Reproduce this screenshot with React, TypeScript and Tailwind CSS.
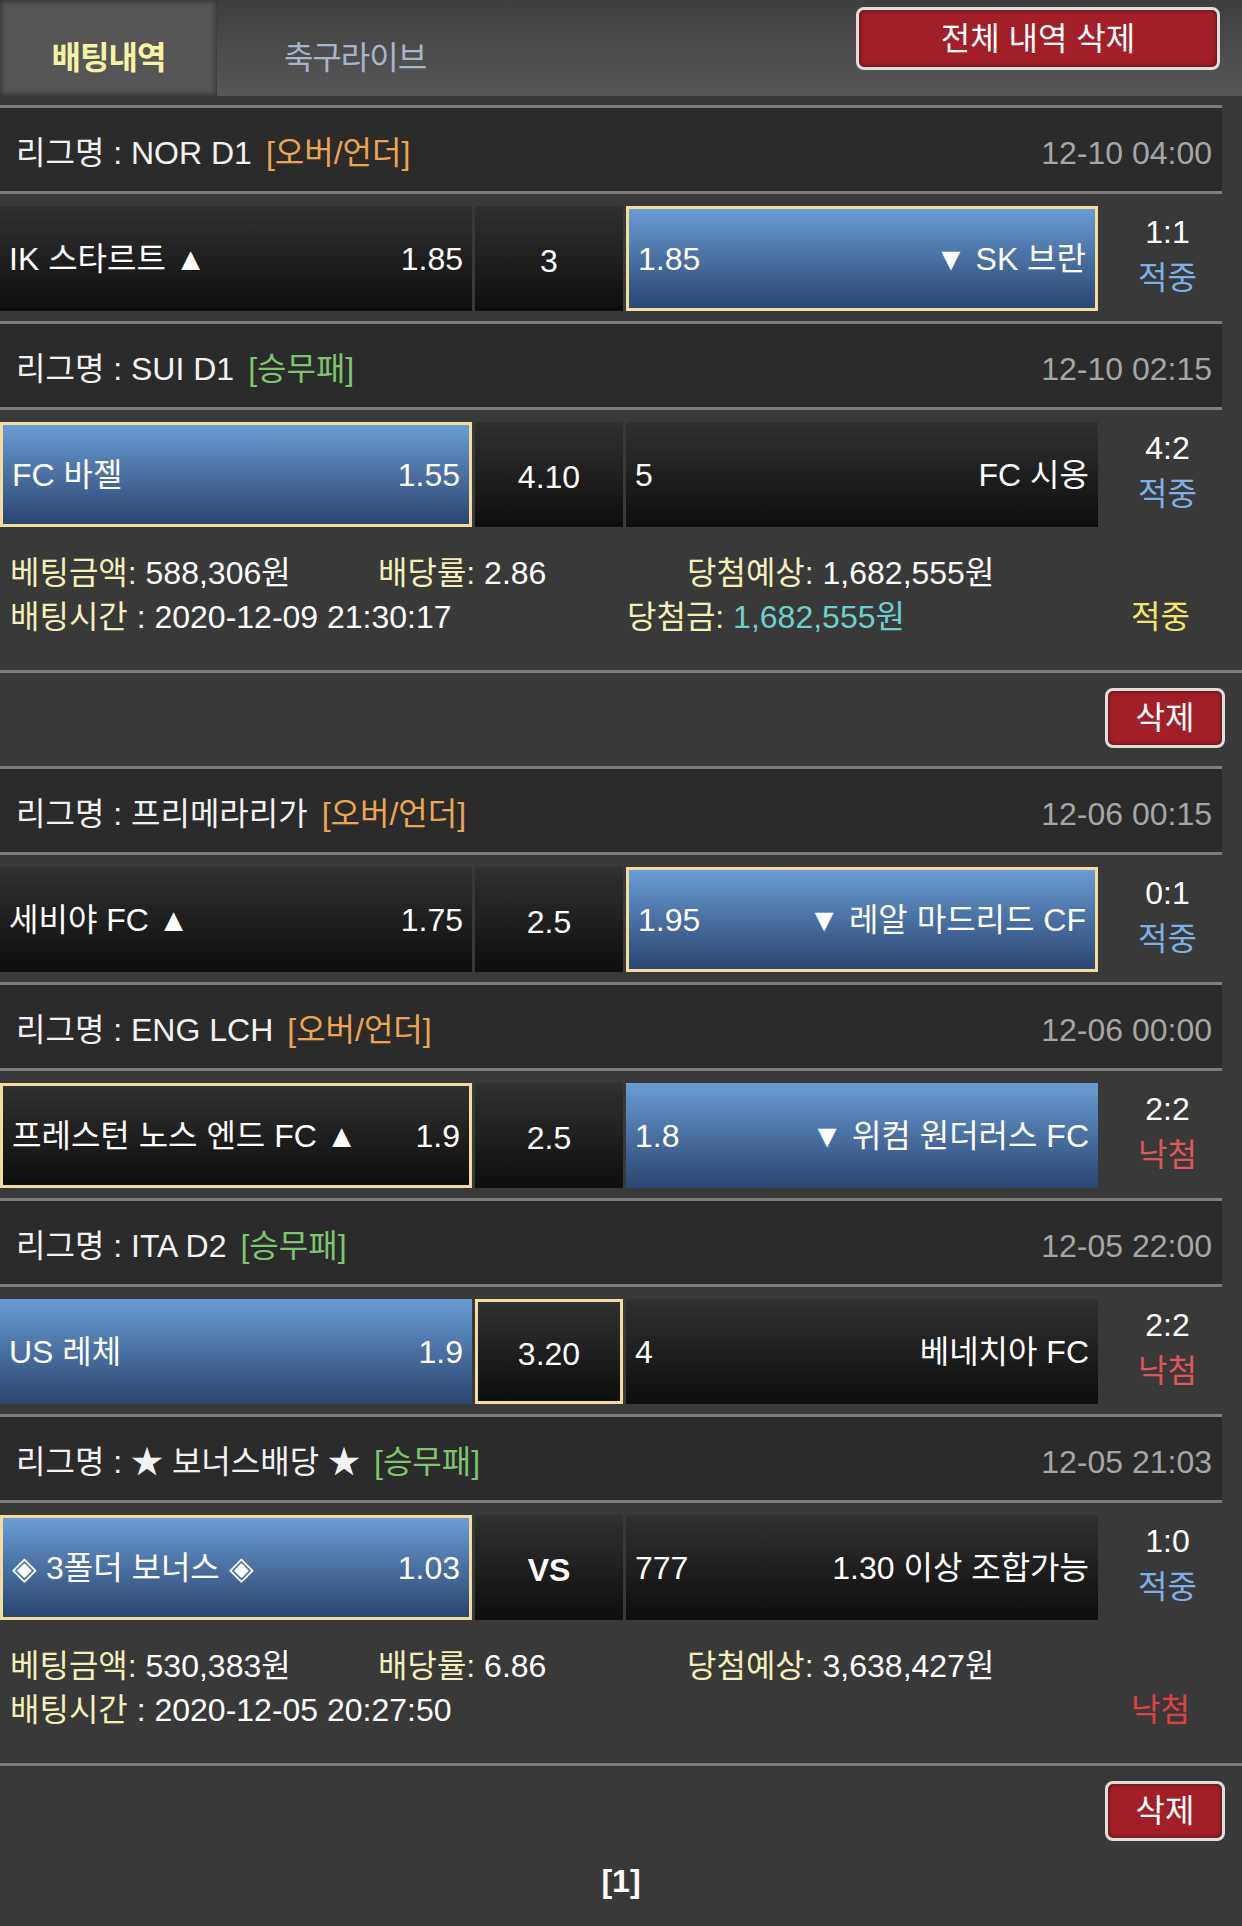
import React from 'react'

type Cell = {
  left?: string
  right?: string
  center?: string
  blue?: boolean
  picked?: boolean
  bold?: boolean
}

type Match = {
  league: string
  kind: string
  time: string
  home: Cell
  draw: Cell
  away: Cell
  score: string
  hit: boolean
}

type Bet = {
  matches: Match[]
  amount: string
  rate: string
  expect: string
  time: string
  win?: string
  hit: boolean
}

const bets: Bet[] = [
  {
    matches: [
      {
        league: 'NOR D1',
        kind: '[오버/언더]',
        time: '12-10 04:00',
        home: { left: 'IK 스타르트 ▲', right: '1.85' },
        draw: { center: '3' },
        away: { left: '1.85', right: '▼ SK 브란', blue: true, picked: true },
        score: '1:1',
        hit: true,
      },
      {
        league: 'SUI D1',
        kind: '[승무패]',
        time: '12-10 02:15',
        home: { left: 'FC 바젤', right: '1.55', blue: true, picked: true },
        draw: { center: '4.10' },
        away: { left: '5', right: 'FC 시옹' },
        score: '4:2',
        hit: true,
      },
    ],
    amount: '588,306원',
    rate: '2.86',
    expect: '1,682,555원',
    time: '2020-12-09 21:30:17',
    win: '1,682,555원',
    hit: true,
  },
  {
    matches: [
      {
        league: '프리메라리가',
        kind: '[오버/언더]',
        time: '12-06 00:15',
        home: { left: '세비야 FC ▲', right: '1.75' },
        draw: { center: '2.5' },
        away: { left: '1.95', right: '▼ 레알 마드리드 CF', blue: true, picked: true },
        score: '0:1',
        hit: true,
      },
      {
        league: 'ENG LCH',
        kind: '[오버/언더]',
        time: '12-06 00:00',
        home: { left: '프레스턴 노스 엔드 FC ▲', right: '1.9', picked: true },
        draw: { center: '2.5' },
        away: { left: '1.8', right: '▼ 위컴 원더러스 FC', blue: true },
        score: '2:2',
        hit: false,
      },
      {
        league: 'ITA D2',
        kind: '[승무패]',
        time: '12-05 22:00',
        home: { left: 'US 레체', right: '1.9', blue: true },
        draw: { center: '3.20', picked: true },
        away: { left: '4', right: '베네치아 FC' },
        score: '2:2',
        hit: false,
      },
      {
        league: '★ 보너스배당 ★',
        kind: '[승무패]',
        time: '12-05 21:03',
        home: { left: '◈ 3폴더 보너스 ◈', right: '1.03', blue: true, picked: true },
        draw: { center: 'VS', bold: true },
        away: { left: '777', right: '1.30 이상 조합가능' },
        score: '1:0',
        hit: true,
      },
    ],
    amount: '530,383원',
    rate: '6.86',
    expect: '3,638,427원',
    time: '2020-12-05 20:27:50',
    hit: false,
  },
]

const OddsCell = ({ cell, width }: { cell: Cell; width: string }) => {
  const bg = cell.blue
    ? 'bg-linear-to-b from-[#6a9dd5] to-[#2b4671]'
    : 'bg-linear-to-b from-[#313131] to-[#0e0e0e]'
  const border = cell.picked ? 'border-[3px] border-[#f2dc9e]' : 'border-0'
  return (
    <div className={`${width} h-[105px] ${bg} ${border} flex items-center text-white text-[32px]`}>
      {cell.center !== undefined ? (
        <span className={`w-full text-center pt-[4px] ${cell.bold ? 'font-bold' : ''}`}>{cell.center}</span>
      ) : (
        <div className="w-full flex justify-between items-center px-[9px]">
          <span>{cell.left}</span>
          <span>{cell.right}</span>
        </div>
      )}
    </div>
  )
}

const MatchBlock = ({ m }: { m: Match }) => {
  const kindColor = m.kind === '[승무패]' ? 'text-[#7fc46e]' : 'text-[#eba552]'
  return (
    <>
      {/* league header */}
      <div className="w-[1222px] border-t-[3px] border-[#7b7b7b] h-[86px] bg-[#2b2b2b] flex items-center justify-between pl-[16px] pr-[10px] pt-[6px] text-[32px]">
        <div className="text-[#f2f2f2]">
          리그명 : {m.league}
          <span className={`ml-[14px] ${kindColor}`}>{m.kind}</span>
        </div>
        <div className="text-[#a6a6a6]">{m.time}</div>
      </div>

      {/* odds row */}
      <div className="w-[1222px] border-t-[3px] border-[#7b7b7b] h-[130px] pt-[12px] pb-[10px] flex gap-[3px]">
        <OddsCell cell={m.home} width="w-[472px]" />
        <OddsCell cell={m.draw} width="w-[148px]" />
        <OddsCell cell={m.away} width="w-[472px]" />
        <div className="flex-1 flex flex-col items-center justify-center pl-[12px] pb-[8px] text-[32px] leading-[46px]">
          <span className="text-white">{m.score}</span>
          <span className={m.hit ? 'text-[#7eb0e6]' : 'text-[#e0555a]'}>{m.hit ? '적중' : '낙첨'}</span>
        </div>
      </div>
    </>
  )
}

const DeleteButton = ({ label, className }: { label: string; className: string }) => (
  <button
    className={`${className} bg-[#a21f27] border-[3px] border-[#dedede] rounded-[8px] text-white text-[32px] shadow-[inset_0_0_5px_rgba(0,0,0,0.55)] flex items-center justify-center`}
  >
    {label}
  </button>
)

const BetBlock = ({ bet }: { bet: Bet }) => (
  <div>
    {bet.matches.map((m, i) => (
      <MatchBlock key={i} m={m} />
    ))}

    {/* bet info */}
    <div className="h-[136px] pt-[14px] pl-[10px] text-[32px] leading-[44px] border-b-[3px] border-[#7b7b7b]">
      <div className="flex">
        <div className="w-[368px]">
          <span className="text-[#f3efb8]">베팅금액:</span> <span className="text-white">{bet.amount}</span>
        </div>
        <div className="w-[309px]">
          <span className="text-[#f3efb8]">배당률:</span> <span className="text-white">{bet.rate}</span>
        </div>
        <div>
          <span className="text-[#f3efb8]">당첨예상:</span> <span className="text-white">{bet.expect}</span>
        </div>
      </div>
      <div className="flex">
        <div className="w-[617px]">
          <span className="text-[#f3efb8]">배팅시간</span> <span className="text-white">: {bet.time}</span>
        </div>
        <div className="w-[504px]">
          {bet.win && (
            <>
              <span className="text-[#f3efb8]">당첨금:</span> <span className="text-[#6fcfcc]">{bet.win}</span>
            </>
          )}
        </div>
        <div className={bet.hit ? 'text-[#f3e46e]' : 'text-[#e0403f]'}>{bet.hit ? '적중' : '낙첨'}</div>
      </div>
    </div>

    {/* delete row */}
    <div className="h-[93px] flex justify-end items-start pt-[15px] pr-[17px]">
      <DeleteButton label="삭제" className="w-[120px] h-[60px]" />
    </div>
  </div>
)

export default function App() {
  return (
    <div className="w-full min-h-[1926px] bg-[#393939] font-['Liberation_Sans','Noto_Sans_CJK_KR',sans-serif]">
      {/* top tabs */}
      <div className="h-[96px] flex bg-linear-to-b from-[#3e3e3e] to-[#585858]">
        <div className="w-[217px] bg-[#565656] shadow-[inset_0_0_7px_rgba(0,0,0,0.6)] flex items-center justify-center pt-[20px]">
          <span className="text-[32px] font-bold text-[#f6f3a4] tracking-[-1px]">배팅내역</span>
        </div>
        <div className="w-[276px] flex items-center justify-center pt-[20px]">
          <span className="text-[32px] text-[#a8b4ca] tracking-[-1px]">축구라이브</span>
        </div>
        <div className="ml-auto mr-[22px] mt-[7px]">
          <DeleteButton label="전체 내역 삭제" className="w-[364px] h-[63px]" />
        </div>
      </div>
      <div className="h-[9px]" />

      {bets.map((b, i) => (
        <BetBlock key={i} bet={b} />
      ))}

      {/* pagination */}
      <div className="h-[44px] flex items-center justify-center text-white text-[32px] font-bold">[1]</div>
    </div>
  )
}
